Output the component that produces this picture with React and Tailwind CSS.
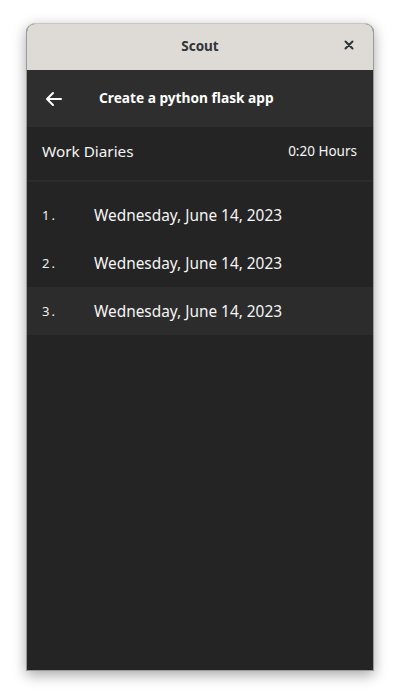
import React from 'react';

const font = { fontFamily: '"Noto Sans", "Open Sans", sans-serif' };

const entries = [
  { n: '1.', date: 'Wednesday, June 14, 2023' },
  { n: '2.', date: 'Wednesday, June 14, 2023' },
  { n: '3.', date: 'Wednesday, June 14, 2023', active: true },
];

const App = () => {
  return (
    <div className="w-[400px] h-[700px] bg-white pt-[23px] pl-[26px]" style={font}>
      <div className="w-[348px] h-[648px] flex flex-col rounded-t-[9px] overflow-hidden bg-[#242424] border border-[#9a9a9a] border-t-[#c8c6c2] shadow-[0_4px_14px_rgba(0,0,0,0.35)]">
        {/* Title bar */}
        <div className="h-[46px] shrink-0 bg-[#dedbd7] relative flex items-center justify-center pb-[1px]">
          <span className="text-[13.5px] font-bold text-[#2e3436]">Scout</span>
          <button className="absolute right-[15px] top-[12px] w-[18px] h-[18px] flex items-center justify-center">
            <svg width="10" height="10" viewBox="0 0 10 10">
              <path d="M1.5 1.5 L8.5 8.5 M8.5 1.5 L1.5 8.5" stroke="#2e3436" strokeWidth="2" strokeLinecap="round" />
            </svg>
          </button>
        </div>

        {/* Header */}
        <div className="h-[57px] shrink-0 bg-[#2e2e2e] flex items-center pl-[18px] pb-[1px]">
          <svg width="18" height="16" viewBox="0 0 18 16" className="mt-[1px]">
            <path d="M8 2 L2 8 L8 14 M2.5 8 H16" fill="none" stroke="#ffffff" strokeWidth="2" strokeLinecap="round" strokeLinejoin="round" />
          </svg>
          <h1 className="ml-[36px] text-[13.7px] font-bold text-white">Create a python flask app</h1>
        </div>

        {/* Summary */}
        <div className="h-[55px] shrink-0 flex items-center justify-between pl-[15px] pr-[16px] pb-[4px] border-b-2 border-[#2c2c2c]">
          <span className="text-[15.3px] text-[#f5f5f5]">Work Diaries</span>
          <span className="text-[13.5px] text-[#f5f5f5]">0:20 Hours</span>
        </div>

        {/* Entries */}
        <div className="pt-[9px] flex flex-col">
          {entries.map((e) => (
            <div
              key={e.n}
              className={`h-[48px] flex items-center pl-[15px] pt-[2px] ${e.active ? 'bg-[#2c2c2c]' : ''}`}
            >
              <span className="w-[52px] text-[13px] tracking-[2px] text-[#f0f0f0]">{e.n}</span>
              <span className="text-[15.4px] text-[#f5f5f5]">{e.date}</span>
            </div>
          ))}
        </div>
      </div>
    </div>
  );
};

export default App;
